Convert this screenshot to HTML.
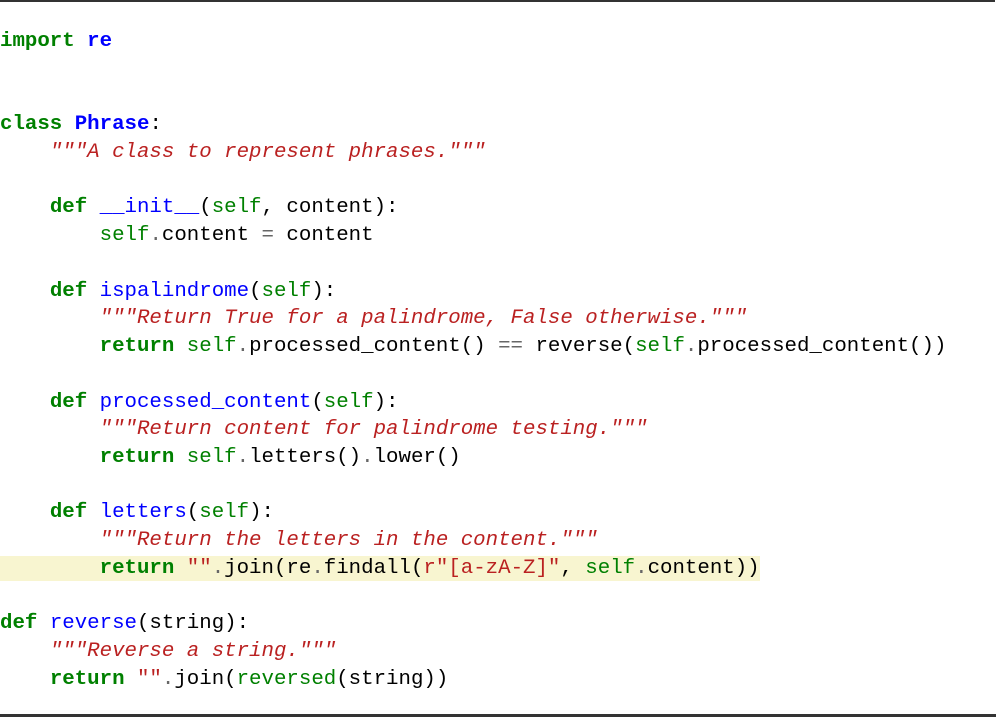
<!DOCTYPE html>
<html><head><style>
html,body{margin:0;padding:0;background:#fff;width:996px;height:717px;overflow:hidden;position:relative}
.t{position:absolute;left:0;top:0;width:995px;height:2px;background:#333}
.b{position:absolute;left:0;top:714px;width:996px;height:3px;background:#333}
pre{position:absolute;left:0;top:28px;margin:0;font-family:"Liberation Mono",monospace;font-size:20.75px;line-height:27.74px;color:#000}
.k{color:#008000;font-weight:bold}
.n{color:#0000ff;font-weight:bold}
.f{color:#0000ff}
.s{color:#ba2121}
.d{color:#ba2121;font-style:italic}
.bi{color:#008000}
.o{color:#666}
.h{background:#f8f5d0;padding:1px 0}
</style></head><body>
<div class="t"></div>
<pre><span class="k">import</span> <span class="n">re</span>


<span class="k">class</span> <span class="n">Phrase</span>:
    <span class="d">"""A class to represent phrases."""</span>

    <span class="k">def</span> <span class="f">__init__</span>(<span class="bi">self</span>, content):
        <span class="bi">self</span><span class="o">.</span>content <span class="o">=</span> content

    <span class="k">def</span> <span class="f">ispalindrome</span>(<span class="bi">self</span>):
        <span class="d">"""Return True for a palindrome, False otherwise."""</span>
        <span class="k">return</span> <span class="bi">self</span><span class="o">.</span>processed_content() <span class="o">==</span> reverse(<span class="bi">self</span><span class="o">.</span>processed_content())

    <span class="k">def</span> <span class="f">processed_content</span>(<span class="bi">self</span>):
        <span class="d">"""Return content for palindrome testing."""</span>
        <span class="k">return</span> <span class="bi">self</span><span class="o">.</span>letters()<span class="o">.</span>lower()

    <span class="k">def</span> <span class="f">letters</span>(<span class="bi">self</span>):
        <span class="d">"""Return the letters in the content."""</span>
<span class="h">        <span class="k">return</span> <span class="s">""</span><span class="o">.</span>join(re<span class="o">.</span>findall(<span class="s">r"[a-zA-Z]"</span>, <span class="bi">self</span><span class="o">.</span>content))</span>

<span class="k">def</span> <span class="f">reverse</span>(string):
    <span class="d">"""Reverse a string."""</span>
    <span class="k">return</span> <span class="s">""</span><span class="o">.</span>join(<span class="bi">reversed</span>(string))
</pre>
<div class="b"></div>
</body></html>
